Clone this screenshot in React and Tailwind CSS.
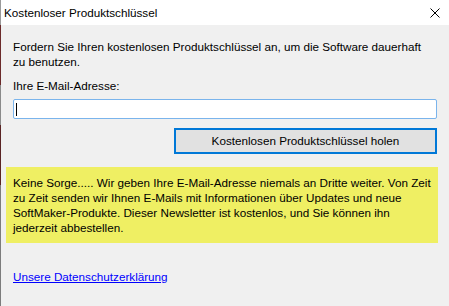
import React from 'react';

const App = () => {
  return (
    <div className="flex h-[306px] w-[449px] overflow-hidden bg-[#f0f0f0] text-[11.7px] text-black" style={{ fontFamily: '"Liberation Sans", Arial, sans-serif' }}>
      {/* what shows behind the window on its left edge */}
      <div className="flex w-px flex-col">
        <div className="h-[25px] bg-[#9a9a9a]" />
        <div className="h-[60px] bg-[#6b2a2a]" />
        <div className="h-[40px] bg-[#8a8a8a]" />
        <div className="h-[60px] bg-[#5a2424]" />
        <div className="flex-1 bg-[#7c7c7c]" />
      </div>

      <div className="flex flex-1 flex-col">
        <header className="flex h-[25px] items-center justify-between bg-white pl-[3px] pr-[9px]">
          <span className="leading-none">Kostenloser Produktschlüssel</span>
          <svg width="10" height="10" viewBox="0 0 10 10" className="text-black">
            <path d="M0.5 0.5 L9.5 9.5 M9.5 0.5 L0.5 9.5" stroke="currentColor" strokeWidth="1" />
          </svg>
        </header>

        <main className="flex flex-col pl-[12px] pr-[12px] pt-[14px]">
          <p className="leading-[15px] whitespace-nowrap">
            Fordern Sie Ihren kostenlosen Produktschlüssel an, um die Software dauerhaft
            <br />
            zu benutzen.
          </p>

          <label className="mt-[9px] leading-[15px]">Ihre E-Mail-Adresse:</label>

          <div className="mt-[6px] flex h-[20px] items-center rounded-[2px] border border-[#7ab4ec] bg-white px-[2px]">
            <div className="h-[13px] w-px bg-black" />
          </div>

          <div className="mt-[9px] flex justify-end">
            <button className="h-[26px] w-[263px] border-2 border-[#0078d7] bg-[#e1e1e1] leading-none">
              Kostenlosen Produktschlüssel holen
            </button>
          </div>
        </main>

        <section className="ml-[5px] mr-[11px] mt-[13px] flex h-[76px] flex-col justify-center bg-[#efef63] pl-[7px] leading-[15px] whitespace-nowrap">
          <span>Keine Sorge..... Wir geben Ihre E-Mail-Adresse niemals an Dritte weiter. Von Zeit</span>
          <span>zu Zeit senden wir Ihnen E-Mails mit Informationen über Updates und neue</span>
          <span>SoftMaker-Produkte. Dieser Newsletter ist kostenlos, und Sie können ihn</span>
          <span>jederzeit abbestellen.</span>
        </section>

        <a href="#" className="ml-[12px] mt-[26px] self-start leading-[15px] text-[#0000ff] underline">
          Unsere Datenschutzerklärung
        </a>
      </div>
    </div>
  );
};

export default App;
